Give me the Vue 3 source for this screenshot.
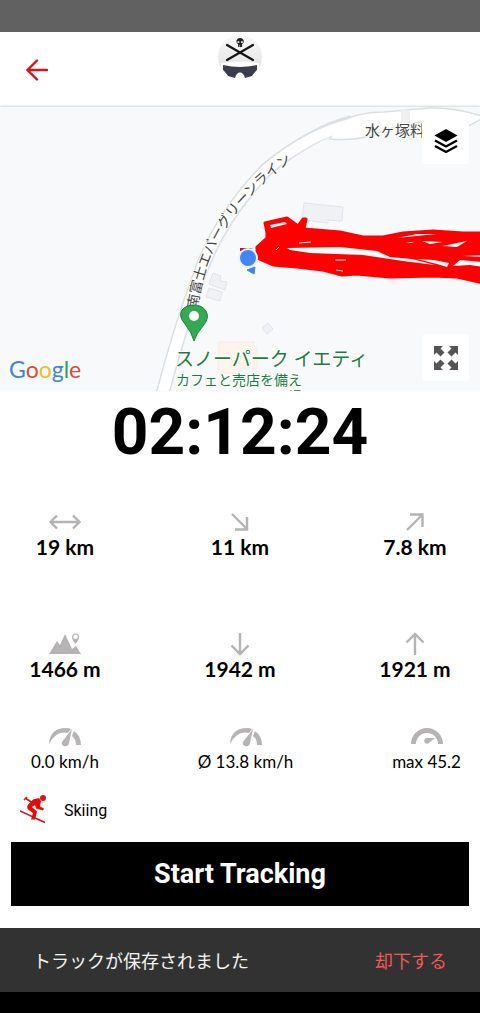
<template>
  <div class="app">
    <div class="status-bar"></div>

    <header class="header">
      <button class="back" type="button" aria-label="Back">
        <svg width="24" height="24" viewBox="0 0 24 24">
          <path d="M23 12H4M13 2.500L3.500 12l9.500 9.500" />
        </svg>
      </button>
      <svg class="logo" width="46" height="46" viewBox="0 0 46 46">
        <defs>
          <linearGradient id="badge" x1="0" y1="0" x2="0" y2="1">
            <stop offset="0" stop-color="#f8f8f8" />
            <stop offset="1" stop-color="#dedede" />
          </linearGradient>
        </defs>
        <circle cx="23" cy="23" r="22" fill="url(#badge)" />
        <path d="M4 29.500q19-4 38 0V46H4z" fill="#fff" />
        <path d="M10 11l26 15M36 11L10 26" stroke="#151515" stroke-width="2.200" stroke-linecap="round" />
        <path d="M19.500 8.500a3.700 3.700 0 1 1 7.200 0l-1.600 1.700v2.800h-4v-2.800z" fill="#222" />
        <path d="M20.500 7.300h1.800V9h-1.800zM24 7.300h1.800V9H24zM22.400 11h.5v2h-.5z" fill="#eee" />
        <path d="M6 31q17 4 34 0l0 5-2 2-3 4-7 2q-1.500-5.500-5-5.500T18 44l-7-2-3-4-2-2z" fill="#3b3d4b" />
      </svg>
    </header>

    <section class="map">
      <svg class="map-canvas" viewBox="0 107 480 284" preserveAspectRatio="xMidYMid slice">
        <!-- buildings -->
        <g fill="#f0f1f3" stroke="#e3e4e7">
          <path d="M304 203l39 4-1 14-14-1v3l-26-3z" />
          <path d="M213 273l8 3-1 5 7 1-2 8-16-6zM209 288l13 4-2 9-14-4z" />
          <path d="M262 328l6-5 5 6-6 5z" />
        </g>
        <path d="M219 342h35v6h3v20h-17v5h-22z" fill="#fdf5ec" stroke="#f8ece0" />

        <!-- roads -->
        <path d="M161 400Q177 337 197 282Q217 220 267 169Q311 133 352 122" fill="none" stroke="#dcdee1" stroke-width="14" />
        <path
          d="M338 124Q355 112 384 112L430 108Q455 107 485 117L465 128Q437 117 410 124L385 130Q362 142 330 139z"
          fill="#fff"
          stroke="#dcdee1"
          stroke-width="1.500"
        />
        <path d="M161 400Q177 337 197 282Q217 220 267 169Q311 133 352 124" fill="none" stroke="#fff" stroke-width="11" />
        <path d="M401 110h9v13h-9z" fill="#eff0f2" />
        <path id="roadLabel" d="M197 309Q208 242 246 202Q262 182 300 155" fill="none" />
        <text class="road-name">
          <textPath href="#roadLabel">南富士エバーグリーンライン</textPath>
        </text>
        <text class="place-name" x="365" y="136">水ヶ塚料金所</text>

        <!-- recorded track -->
        <path
          d="M257 247L267 238V233L265 223L287 218L298 226L303 219H306L304 229L340 232L363 237L383 237L403 233L433 231L463 233H484V283L457 277L433 276L390 277L357 274L342 275L323 270L297 267L273 265L257 258z"
          fill="#f00"
          stroke="#f00"
          stroke-width="3"
          stroke-linejoin="round"
        />
        <g fill="#f8f9fb">
          <path d="M270 225l15-3 2 2-16 4z" />
          <path d="M287 248L340 247L377 251L390 257L412 259L435 265L403 261L363 255L310 253L290 250z" />
          <path d="M417 259l17 1 15 3-2 4-10-3zM453 266l7-6 24 2v5l-14-2zM462 256l22-1v2z" />
          <path d="M397 238l20-4h20l-21 2zM422 241l21 1-13 2zM406 242h8l-3 1zM442 246l25-5-10 6z" />
        </g>
        <path d="M299 243l12-1M276 250l3-3M335 260h11M336 270l7 1" stroke="#ffe9e9" stroke-width="1" />

        <!-- current position -->
        <path d="M240 248h13l-8 3h-5z" fill="#c4142c" />
        <path d="M247 270l8-3-1 7z" fill="#4284e6" stroke="#4284e6" stroke-width="1" />
        <circle cx="248" cy="258" r="10" fill="#e8f1fd" />
        <circle cx="248" cy="258" r="8" fill="#4285f4" />

        <!-- place marker -->
        <path d="M194 341q-2-8-9-17-7-8-3-14 4-5 12-5t12 6q4 7-3 15-7 8-9 15z" fill="#34a853" stroke="#188038" />
        <circle cx="194" cy="316" r="5" fill="#fff" />
        <g class="poi">
          <text class="poi-title" x="175" y="366">スノーパーク イエティ</text>
          <text class="poi-text" x="176" y="385">カフェと売店を備え</text>
          <text class="poi-text" x="176" y="402">たのどかなスキー場</text>
        </g>
      </svg>

      <button class="map-button layers" type="button" aria-label="Map layers">
        <svg width="24" height="26" viewBox="0 0 24 26">
          <path d="M12 1L0.500 7.500 12 14l11.500-6.500z" />
          <path d="M1 12.500l11 6 11-6M1 18l11 6 11-6" fill="none" stroke="#000" stroke-width="2.400" />
        </svg>
      </button>
      <button class="map-button expand" type="button" aria-label="Full screen">
        <svg width="24" height="24" viewBox="0 0 24 24" fill="#555">
          <path
            v-for="angle in [0, 90, 180, 270]"
            :key="angle"
            d="M0 0h9L6.500 2.500l4 4-4 4-4-4L0 9z"
            :transform="`rotate(${angle} 12 12)`"
          />
        </svg>
      </button>
      <a class="google" href="#" aria-label="Google">
        <span v-for="(item, i) in googleLetters" :key="i" :class="item.color">{{ item.letter }}</span>
      </a>
    </section>

    <main>
      <div class="timer">02:12:24</div>

      <div v-for="(row, i) in rows" :key="i" :class="['metrics', row.type]">
        <div v-for="metric in row.items" :key="metric.text" class="metric">
          <svg class="metric-icon" width="32" height="24" viewBox="0 0 32 24">
            <path v-if="icons[metric.icon].line" class="line" :d="icons[metric.icon].line" />
            <path v-if="icons[metric.icon].fill" class="solid" :d="icons[metric.icon].fill" />
          </svg>
          <span class="metric-text">{{ metric.text }}</span>
        </div>
      </div>

      <div class="activity">
        <svg width="28" height="30" viewBox="0 0 28 30">
          <circle cx="23" cy="3" r="3" fill="#d3171a" />
          <path d="M13 4.500l6-1.500 2 3-1 5.500 4 2-1 2-7-2-1-3.500-3 2 5 4.500-2 8h-4l2-6.500-5-3.500q-2-3 1-6z" fill="#e90808" />
          <path d="M5 3l11 7M4 5l3-3M0 16l25 11.500M16 23.500l9 4" fill="none" stroke="#cf1519" stroke-width="1.500" />
        </svg>
        <span>Skiing</span>
      </div>

      <button class="start" type="button">Start Tracking</button>
    </main>

    <div v-if="showSnackbar" class="snackbar" role="status">
      <span>トラックが保存されました</span>
      <button class="dismiss" type="button" @click="showSnackbar = false">却下する</button>
    </div>
    <div class="nav-bar"></div>
  </div>
</template>

<script setup>
import { ref } from "vue";

const showSnackbar = ref(true);

const googleLetters = [
  { letter: "G", color: "blue" },
  { letter: "o", color: "red" },
  { letter: "o", color: "yellow" },
  { letter: "g", color: "blue" },
  { letter: "l", color: "green" },
  { letter: "e", color: "red" },
];

const icons = {
  distance: { line: "M2 12h28M8 5.500L1.500 12 8 18.500M24 5.500l6.500 6.500-6.500 6.500" },
  downhill: { line: "M8 4l15 15M23 7v12.500H11" },
  uphill: { line: "M8 20L23 5M11 4.500h12.500V17" },
  descent: { line: "M16 1v21M7.500 13.500L16 22l8.500-8.500" },
  ascent: { line: "M16 23V2M7.500 10.500L16 2l8.500 8.500" },
  altitude: {
    fill: "M0 22L8 9l3 4 5-11 7 15 4-3 5 8zM26.500 12q-3.500-4-3.500-7a3.500 3.500 0 0 1 7 0q0 3-3.500 7zM26.500 2.500a2.300 2.300 0 1 0 0 4.600 2.300 2.300 0 0 0 0-4.600z",
  },
  speed: {
    fill: "M0 19Q1 3 17 3q3 0 5 1l-3 4Q7 5 0 19zM23 4l-3 14q-1 4-5 3-3-1-2-4zM25 6q7 5 7 14h-5q0-6-4-9z",
  },
  maxSpeed: {
    fill: "M0 19a16 16 0 0 1 32 0h-5a11 11 0 0 0-22 0zM24 13l-5 4q-2 3-5 1-2-3 1-5z",
  },
};

const rows = [
  {
    type: "large first",
    items: [
      { icon: "distance", text: "19 km" },
      { icon: "downhill", text: "11 km" },
      { icon: "uphill", text: "7.8 km" },
    ],
  },
  {
    type: "large",
    items: [
      { icon: "altitude", text: "1466 m" },
      { icon: "descent", text: "1942 m" },
      { icon: "ascent", text: "1921 m" },
    ],
  },
  {
    type: "small",
    items: [
      { icon: "speed", text: "0.0 km/h" },
      { icon: "speed", text: "Ø 13.8 km/h" },
      { icon: "maxSpeed", text: "max 45.2" },
    ],
  },
];
</script>

<style>
body {
  margin: 0;
  background: #fff;
}
</style>

<style scoped>
.app {
  font-family: Roboto, "Noto Sans CJK JP", sans-serif;
  color: #000;
}
button {
  border: 0;
  padding: 0;
  font: inherit;
  cursor: pointer;
}
.status-bar {
  height: 32px;
  background: #616161;
}
.header {
  display: grid;
  grid-template-columns: 1fr auto 1fr;
  height: 75px;
  padding: 0 24px;
}
.back {
  display: flex;
  align-items: center;
  justify-content: flex-start;
  background: none;
}
.back svg {
  fill: none;
  stroke: #d31418;
  stroke-width: 2.4;
  stroke-linecap: round;
}
.logo {
  margin-top: 2px;
}
.map {
  position: relative;
  height: 284px;
  overflow: hidden;
  background: #f8f9fb;
  box-shadow: 0 -1px 2px #d5d6d8;
}
.map-canvas {
  display: block;
  width: 100%;
  height: 100%;
}
.road-name,
.place-name {
  font-size: 14px;
  fill: #444;
  stroke: #fff;
  stroke-width: 2px;
  paint-order: stroke;
}
.place-name {
  font-size: 15px;
}
.poi {
  fill: #1d7a42;
  stroke: #fff;
  stroke-width: 2px;
  paint-order: stroke;
}
.poi-title {
  font-size: 19px;
}
.poi-text {
  font-size: 14px;
}
.map-button {
  position: absolute;
  right: 11px;
  display: flex;
  align-items: center;
  justify-content: center;
  width: 47px;
  height: 47px;
  border-radius: 4px;
  background: #fff;
}
.layers {
  top: 10px;
}
.expand {
  bottom: 10px;
}
.google {
  position: absolute;
  left: 9px;
  bottom: 8px;
  font-family: Lato, sans-serif;
  font-size: 23px;
  line-height: 28px;
  text-decoration: none;
}
.blue {
  color: #4483d4;
}
.red {
  color: #d94a3e;
}
.yellow {
  color: #eebc2c;
}
.green {
  color: #35a058;
}
.timer {
  font-size: 64px;
  font-weight: 700;
  line-height: 84px;
  text-align: center;
}
.metrics {
  display: flex;
  justify-content: space-between;
  font-family: Lato, sans-serif;
}
.metric {
  display: flex;
  flex-direction: column;
  align-items: center;
  line-height: 26px;
}
.large {
  margin-top: 72px;
  padding: 0 15px;
  font-size: 21px;
  font-weight: 700;
}
.large.first {
  margin-top: 35px;
}
.large .metric {
  width: 100px;
}
.small {
  margin-top: 43px;
  padding: 0 19px 0 31px;
  font-size: 17px;
}
.metric-icon .line {
  fill: none;
  stroke: #b5b3b3;
  stroke-width: 2.4;
}
.metric-icon .solid {
  fill: #b5b3b3;
  fill-rule: evenodd;
}
.activity {
  display: flex;
  align-items: center;
  gap: 16px;
  height: 40px;
  margin-top: 15px;
  padding: 0 20px;
  font-size: 16px;
}
.start {
  display: block;
  width: calc(100% - 22px);
  height: 64px;
  margin: 12px 11px 22px;
  background: #000;
  color: #fff;
  font-size: 27px;
  font-weight: 700;
}
.snackbar {
  display: flex;
  align-items: center;
  justify-content: space-between;
  height: 64px;
  padding: 0 33px;
  background: #323232;
  color: #f4f4f4;
  font-size: 18px;
}
.dismiss {
  background: none;
  color: #ef5a55;
}
.nav-bar {
  height: 21px;
  background: #000;
}
</style>
